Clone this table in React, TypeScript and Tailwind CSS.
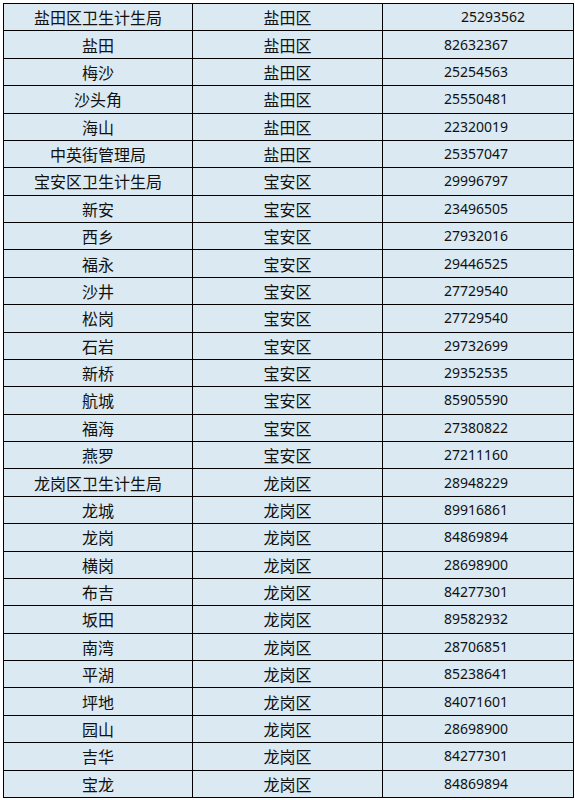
const rows: [string, string, string][] = [
  ['盐田区卫生计生局', '盐田区', '25293562'],
  ['盐田', '盐田区', '82632367'],
  ['梅沙', '盐田区', '25254563'],
  ['沙头角', '盐田区', '25550481'],
  ['海山', '盐田区', '22320019'],
  ['中英街管理局', '盐田区', '25357047'],
  ['宝安区卫生计生局', '宝安区', '29996797'],
  ['新安', '宝安区', '23496505'],
  ['西乡', '宝安区', '27932016'],
  ['福永', '宝安区', '29446525'],
  ['沙井', '宝安区', '27729540'],
  ['松岗', '宝安区', '27729540'],
  ['石岩', '宝安区', '29732699'],
  ['新桥', '宝安区', '29352535'],
  ['航城', '宝安区', '85905590'],
  ['福海', '宝安区', '27380822'],
  ['燕罗', '宝安区', '27211160'],
  ['龙岗区卫生计生局', '龙岗区', '28948229'],
  ['龙城', '龙岗区', '89916861'],
  ['龙岗', '龙岗区', '84869894'],
  ['横岗', '龙岗区', '28698900'],
  ['布吉', '龙岗区', '84277301'],
  ['坂田', '龙岗区', '89582932'],
  ['南湾', '龙岗区', '28706851'],
  ['平湖', '龙岗区', '85238641'],
  ['坪地', '龙岗区', '84071601'],
  ['园山', '龙岗区', '28698900'],
  ['吉华', '龙岗区', '84277301'],
  ['宝龙', '龙岗区', '84869894'],
]

export default function App() {
  return (
    <div className="w-[575px] h-[800px] bg-white pt-[3px] pl-[3px]">
      <table className="w-[570px] h-[795px] table-fixed border-collapse bg-[#dae9f2] text-[#111] font-['Noto_Sans_CJK_SC','Noto_Sans',sans-serif]">
        <colgroup>
          <col className="w-[189px]" />
          <col className="w-[190px]" />
          <col className="w-[191px]" />
        </colgroup>
        <tbody>
          {rows.map(([name, district, phone], i) => (
            <tr key={i} className="h-[27.38px]">
              <td className="border border-black p-0 text-center text-[16px] leading-none">{name}</td>
              <td className="border border-black p-0 text-center text-[16px] leading-none">{district}</td>
              <td
                className={
                  i === 0
                    ? "border border-black p-0 pl-[78px] text-left text-[14px] leading-none font-['Noto_Sans',sans-serif]"
                    : "border border-black p-0 pl-[61px] text-left text-[14px] leading-none font-['Noto_Sans',sans-serif]"
                }
              >
                {phone}
              </td>
            </tr>
          ))}
        </tbody>
      </table>
    </div>
  )
}
